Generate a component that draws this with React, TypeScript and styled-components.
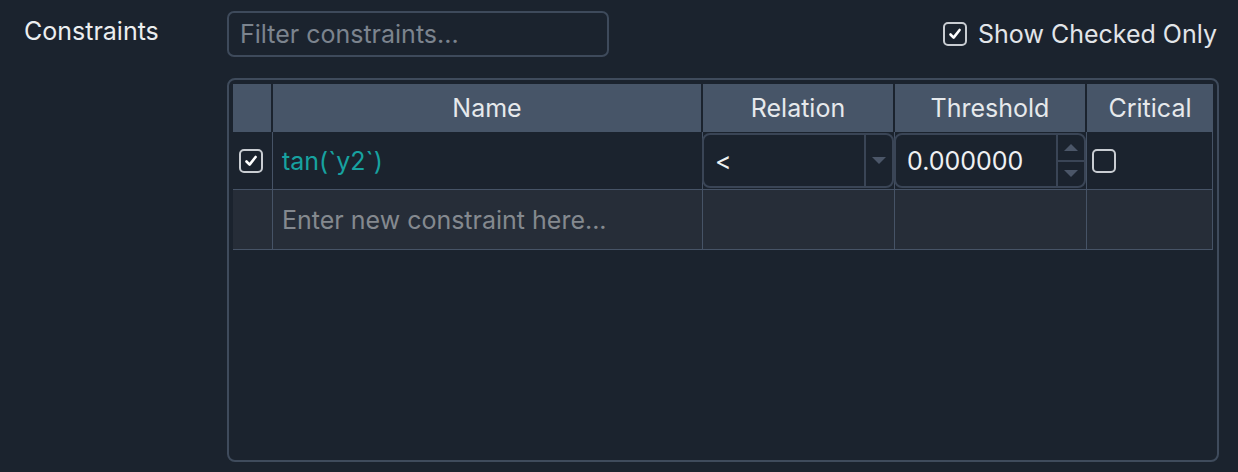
import styled, { createGlobalStyle } from 'styled-components';

const GlobalStyle = createGlobalStyle`
  html, body {
    margin: 0;
    padding: 0;
    background: #1b232e;
  }
  body {
    font-family: Inter, "Noto Sans", "Liberation Sans", sans-serif;
    color: #e6e8eb;
  }
`;

const columns = '40px 430px 192px 192px 1fr';

const Page = styled.div`
  display: flex;
  width: 1238px;
  height: 472px;
  box-sizing: border-box;
  padding: 11px 19px 10px 24px;
`;

const SideLabel = styled.div`
  width: 203px;
  flex-shrink: 0;
  padding-top: 5px;
  font-size: 25px;
  color: #eceef0;
`;

const Main = styled.div`
  flex: 1;
  display: flex;
  flex-direction: column;
  gap: 21px;
`;

const TopBar = styled.div`
  display: flex;
  align-items: center;
  justify-content: space-between;
`;

const FilterInput = styled.div`
  width: 382px;
  height: 46px;
  box-sizing: border-box;
  border: 2px solid #3e4a5b;
  border-radius: 7px;
  display: flex;
  align-items: center;
  padding-left: 11px;
  font-size: 25px;
  color: #7c848e;
`;

const CheckLabel = styled.label`
  display: flex;
  align-items: center;
  gap: 11px;
  font-size: 25px;
  color: #e2e5e9;
  margin-right: 2px;
`;

const Box = styled.span<{ $size?: number }>`
  width: ${({ $size }) => $size ?? 22}px;
  height: ${({ $size }) => $size ?? 22}px;
  box-sizing: border-box;
  border: 2px solid #c9cdd2;
  border-radius: 5px;
  display: flex;
  align-items: center;
  justify-content: center;
`;

const Frame = styled.div`
  flex: 1;
  border: 2px solid #3f4b5c;
  border-radius: 8px;
  padding: 4px 4px;
`;

const Grid = styled.div`
  display: grid;
  grid-template-columns: ${columns};
`;

const HeadCell = styled.div<{ $last?: boolean }>`
  height: 48px;
  background: #475568;
  border-right: ${({ $last }) => ($last ? 'none' : '2px solid #1b232e')};
  display: flex;
  align-items: center;
  justify-content: center;
  font-size: 25px;
  color: #e6e9ec;
`;

const Cell = styled.div<{ $alt?: boolean }>`
  height: ${({ $alt }) => ($alt ? 60 : 58)}px;
  box-sizing: border-box;
  background: ${({ $alt }) => ($alt ? '#262d38' : '#1b232e')};
  border-bottom: 1px solid #465366;
  border-right: 1px solid #465366;
  display: flex;
  align-items: center;
  font-size: 25px;
`;

const NameText = styled.span<{ $placeholder?: boolean }>`
  padding-left: 9px;
  color: ${({ $placeholder }) => ($placeholder ? '#84898f' : '#17a2a0')};
`;

const Field = styled.div`
  flex: 1;
  align-self: stretch;
  margin: 1px 0 1px -1px;
  border: 2px solid #3a4556;
  border-radius: 8px;
  display: flex;
`;

const FieldValue = styled.div`
  flex: 1;
  display: flex;
  align-items: center;
  padding-left: 11px;
  font-size: 25px;
  color: #eef0f2;
`;

const FieldSide = styled.div`
  width: 26px;
  border-left: 2px solid #3a4556;
  display: flex;
  flex-direction: column;
  align-items: center;
  justify-content: center;
`;

const StepBtn = styled.div<{ $top?: boolean }>`
  flex: 1;
  width: 100%;
  display: flex;
  align-items: center;
  justify-content: center;
  border-bottom: ${({ $top }) => ($top ? '2px solid #3a4556' : 'none')};
`;

const Tri = ({ up }: { up?: boolean }) => (
  <svg width="14" height="8" viewBox="0 0 14 8">
    <path d={up ? 'M0 8 L7 1 L14 8 Z' : 'M0 0 L14 0 L7 7 Z'} fill="#4b5668" />
  </svg>
);

const Check = ({ size = 14 }: { size?: number }) => (
  <svg width={size} height={size} viewBox="0 0 14 14">
    <path
      d="M2.5 7.5 L5.6 10.6 L11.6 3"
      fill="none"
      stroke="#ffffff"
      strokeWidth="2.6"
      strokeLinecap="round"
      strokeLinejoin="round"
    />
  </svg>
);

const CheckCell = styled(Cell)`
  justify-content: center;
  padding-right: 4px;
`;

const CriticalCell = styled(Cell)`
  padding-left: 5px;
`;

export default function App() {
  return (
    <>
      <GlobalStyle />
      <Page>
        <SideLabel>Constraints</SideLabel>
        <Main>
          <TopBar>
            <FilterInput>Filter constraints...</FilterInput>
            <CheckLabel>
              <Box $size={24}>
                <Check />
              </Box>
              Show Checked Only
            </CheckLabel>
          </TopBar>
          <Frame>
            <Grid>
              <HeadCell />
              <HeadCell>Name</HeadCell>
              <HeadCell>Relation</HeadCell>
              <HeadCell>Threshold</HeadCell>
              <HeadCell $last>Critical</HeadCell>

              <CheckCell>
                <Box $size={24}>
                  <Check />
                </Box>
              </CheckCell>
              <Cell>
                <NameText>tan(`y2`)</NameText>
              </Cell>
              <Cell>
                <Field>
                  <FieldValue>&lt;</FieldValue>
                  <FieldSide>
                    <Tri />
                  </FieldSide>
                </Field>
              </Cell>
              <Cell>
                <Field>
                  <FieldValue>0.000000</FieldValue>
                  <FieldSide>
                    <StepBtn $top>
                      <Tri up />
                    </StepBtn>
                    <StepBtn>
                      <Tri />
                    </StepBtn>
                  </FieldSide>
                </Field>
              </Cell>
              <CriticalCell>
                <Box $size={24} />
              </CriticalCell>

              <Cell $alt />
              <Cell $alt>
                <NameText $placeholder>Enter new constraint here...</NameText>
              </Cell>
              <Cell $alt />
              <Cell $alt />
              <Cell $alt />
            </Grid>
          </Frame>
        </Main>
      </Page>
    </>
  );
}
